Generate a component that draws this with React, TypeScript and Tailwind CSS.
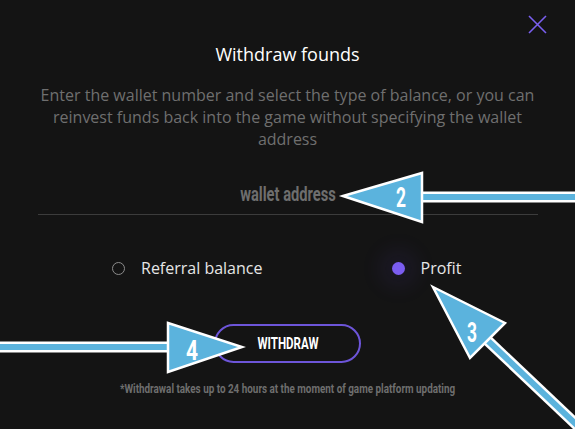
import { useState } from 'react'

// Withdraw modal — 입력 + 라디오 + 버튼, 위에 안내 화살표 겹침
// 좁은 글꼴이 없어서 Roboto Bold를 가로로 눌러 씀
const condensed = "font-['Roboto',sans-serif] font-bold"

function Arrows() {
  const blue = '#5bb3dd'
  const num = {
    fill: '#fff',
    fontFamily: "Roboto, sans-serif",
    fontWeight: 700,
    fontSize: 27,
  } as const
  return (
    <svg className="absolute inset-0 pointer-events-none" width="575" height="429" viewBox="0 0 575 429" aria-hidden="true">
      {/* 2 — wallet address */}
      <line x1="420" y1="197" x2="580" y2="197" stroke="#fff" strokeWidth="11" />
      <line x1="420" y1="197" x2="580" y2="197" stroke={blue} strokeWidth="6" />
      <polygon points="343,196 422,173 422,222" fill={blue} stroke="#fff" strokeWidth="2.5" />
      <text x="396" y="207" textLength="10" lengthAdjust="spacingAndGlyphs" style={num}>2</text>

      {/* 3 — profit */}
      <line x1="486" y1="339" x2="600" y2="447" stroke="#fff" strokeWidth="11" />
      <line x1="486" y1="339" x2="600" y2="447" stroke={blue} strokeWidth="6" />
      <polygon points="433,287 505,323 470,358" fill={blue} stroke="#fff" strokeWidth="2.5" />
      <text x="467" y="342" textLength="10" lengthAdjust="spacingAndGlyphs" style={num}>3</text>

      {/* 4 — withdraw */}
      <line x1="-5" y1="347" x2="170" y2="347" stroke="#fff" strokeWidth="11" />
      <line x1="-5" y1="347" x2="170" y2="347" stroke={blue} strokeWidth="6" />
      <polygon points="168,323 242,347 168,372" fill={blue} stroke="#fff" strokeWidth="2.5" />
      <text x="186" y="360" textLength="12" lengthAdjust="spacingAndGlyphs" style={num}>4</text>
    </svg>
  )
}

function Radio({ label, checked, onClick }: { label: string; checked: boolean; onClick: () => void }) {
  return (
    <button onClick={onClick} className="flex items-center gap-[16px] text-[16px] text-[#e6e6e6]">
      <span
        className={
          checked
            ? 'w-[13px] h-[13px] rounded-full bg-[#7b5df0] shadow-[0_0_22px_12px_rgba(110,80,230,0.09)]'
            : 'w-[13px] h-[13px] rounded-full border border-[#8c8c8c]'
        }
      />
      {label}
    </button>
  )
}

export default function App() {
  const [type, setType] = useState<'ref' | 'profit'>('profit')

  return (
    <div className="relative w-[575px] h-[429px] overflow-hidden bg-[#141414] font-['Open_Sans',sans-serif]">
      <div className="flex flex-col">
        {/* 닫기 */}
        <div className="flex justify-end pt-[15px] pr-[28px]">
          <svg width="19" height="19" viewBox="0 0 19 19" fill="none" stroke="#7a5ff0" strokeWidth="1.6">
            <path d="M1 1L18 18M18 1L1 18" />
          </svg>
        </div>

        <h2 className="mt-[8px] text-center text-[18px] leading-[24px] text-white">Withdraw founds</h2>

        <p className="mt-[18px] mx-auto w-[500px] text-center text-[16px] leading-[22px] text-[#6f6f6f]">
          Enter the wallet number and select the type of balance, or you can reinvest funds back into the game
          without specifying the wallet address
        </p>

        {/* 지갑 주소 입력 */}
        <div className="mt-[24px] mx-auto w-[500px] h-[41px] border-b border-[#3c3c3c] flex justify-center">
          <input
            placeholder="wallet address"
            className={`w-full h-full bg-transparent text-center text-[21px] text-[#bbb] placeholder:text-[#6e6e6e] outline-none scale-x-[0.7] ${condensed}`}
          />
        </div>

        <div className="mt-[41px] grid grid-cols-2 px-[112px]">
          <div className="flex">
            <Radio label="Referral balance" checked={type === 'ref'} onClick={() => setType('ref')} />
          </div>
          <div className="flex pl-[104px]">
            <Radio label="Profit" checked={type === 'profit'} onClick={() => setType('profit')} />
          </div>
        </div>

        <button className="mt-[44px] mx-auto w-[147px] h-[39px] rounded-full border-2 border-[#6d55d9] flex items-center justify-center">
          <span className={`inline-block text-[17px] text-white scale-x-[0.68] ${condensed}`}>WITHDRAW</span>
        </button>

        <p className="mt-[16px] flex justify-center">
          <span className={`inline-block whitespace-nowrap text-[13px] text-[#6e6e6e] scale-x-[0.76] ${condensed}`}>
            *Withdrawal takes up to 24 hours at the moment of game platform updating
          </span>
        </p>
      </div>

      <Arrows />
    </div>
  )
}
